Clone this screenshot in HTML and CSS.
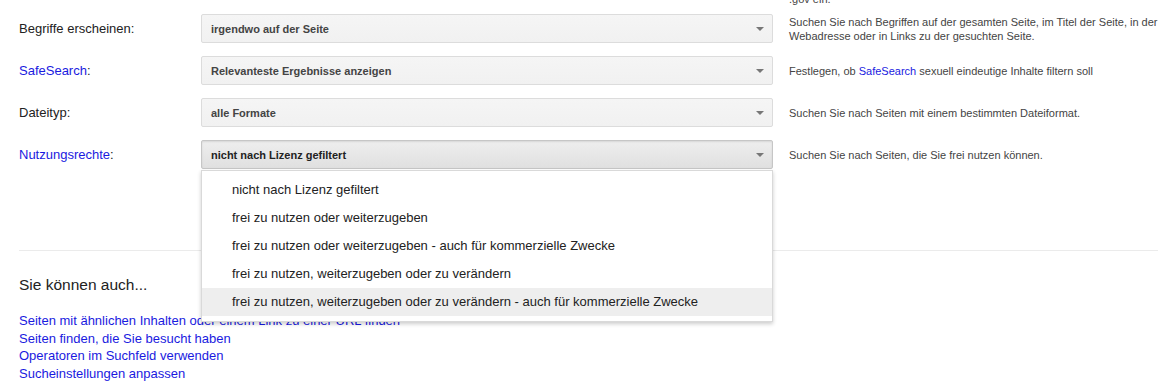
FILE: index.html
```html
<!DOCTYPE html>
<html lang="de">
    <head>
        <meta charset="UTF-8">
        <meta name="viewport" content="width=device-width, initial-scale=1.0">
        <title>Erweiterte Suche</title>
        <link rel="stylesheet" href="styles.css">
    </head>
    <body>
        <div class="page">
            <div class="cut">.gov ein.</div>

            <div class="row">
                <div class="label">Begriffe erscheinen:</div>
                <div class="select"><span>irgendwo auf der Seite</span><i class="arrow"></i></div>
                <div class="help">Suchen Sie nach Begriffen auf der gesamten Seite, im Titel der Seite, in der Webadresse oder in Links zu der gesuchten Seite.</div>
            </div>

            <div class="row">
                <div class="label"><a href="#">SafeSearch</a>:</div>
                <div class="select"><span>Relevanteste Ergebnisse anzeigen</span><i class="arrow"></i></div>
                <div class="help">Festlegen, ob <a href="#">SafeSearch</a> sexuell eindeutige Inhalte filtern soll</div>
            </div>

            <div class="row">
                <div class="label">Dateityp:</div>
                <div class="select"><span>alle Formate</span><i class="arrow"></i></div>
                <div class="help">Suchen Sie nach Seiten mit einem bestimmten Dateiformat.</div>
            </div>

            <div class="row last">
                <div class="label"><a href="#">Nutzungsrechte</a>:</div>
                <div class="select open">
                    <span>nicht nach Lizenz gefiltert</span><i class="arrow"></i>
                    <!-- open menu -->
                    <ul class="menu">
                        <li>nicht nach Lizenz gefiltert</li>
                        <li>frei zu nutzen oder weiterzugeben</li>
                        <li>frei zu nutzen oder weiterzugeben - auch für kommerzielle Zwecke</li>
                        <li>frei zu nutzen, weiterzugeben oder zu verändern</li>
                        <li class="hover">frei zu nutzen, weiterzugeben oder zu verändern - auch für kommerzielle Zwecke</li>
                    </ul>
                </div>
                <div class="help">Suchen Sie nach Seiten, die Sie frei nutzen können.</div>
            </div>

            <div class="divider"></div>

            <h2 class="more">Sie können auch...</h2>
            <ul class="links">
                <li><a href="#">Seiten mit ähnlichen Inhalten oder einem Link zu einer URL finden</a></li>
                <li><a href="#">Seiten finden, die Sie besucht haben</a></li>
                <li><a href="#">Operatoren im Suchfeld verwenden</a></li>
                <li><a href="#">Sucheinstellungen anpassen</a></li>
            </ul>
        </div>
    </body>
</html>
```

FILE: styles.css
```css
body { margin: 0; font-family: 'Liberation Sans', Arial, sans-serif; background: #fff; color: #222; overflow: hidden; }
a { color: #1a1ae0; text-decoration: none; }

.page { padding: 0 9px 0 19px; }

.cut { margin: -8px 0 0 770px; font-size: 11px; line-height: 14px; color: #444; }

.row { display: grid; grid-template-columns: 182px 572px 1fr; align-items: center; margin-top: 8px; }
.row + .row { margin-top: 13px; }

.label { font-size: 13px; line-height: 29px; color: #222; }

.select {
    position: relative;
    box-sizing: border-box;
    height: 29px;
    padding: 0 9px;
    border: 1px solid #dcdcdc;
    border-radius: 2px;
    background: linear-gradient(#f5f5f5, #f1f1f1);
    font-size: 11px;
    font-weight: bold;
    line-height: 28px;
    color: #444;
}
.select.open {
    border-color: #c6c6c6;
    background: linear-gradient(#eeeeee, #e0e0e0);
    box-shadow: inset 0 1px 2px rgba(0, 0, 0, 0.1);
    color: #222;
}
.arrow {
    position: absolute;
    right: 8px;
    top: 12px;
    width: 0;
    height: 0;
    border-left: 4px solid transparent;
    border-right: 4px solid transparent;
    border-top: 4px solid #777;
}

.help { padding-left: 16px; font-size: 11px; line-height: 14px; color: #444; }

.menu {
    position: absolute;
    left: -1px;
    top: 29px;
    box-sizing: border-box;
    width: calc(100% + 2px);
    margin: 0;
    padding: 5px 0;
    list-style: none;
    background: #fff;
    border: 1px solid rgba(0, 0, 0, 0.15);
    box-shadow: 0 2px 4px rgba(0, 0, 0, 0.2);
    z-index: 2;
}
.menu li {
    padding-left: 30px;
    font-size: 13px;
    font-weight: normal;
    line-height: 28px;
    color: #222;
}
.menu li.hover { background: #eeeeee; }

.divider { height: 1px; margin-top: 81px; background: #ebebeb; }

.more { margin: 24px 0 0; font-size: 15.5px; font-weight: normal; line-height: 20px; color: #222; }

.links { list-style: none; margin: 17px 0 0; padding: 0; font-size: 13px; line-height: 17.5px; }
```
